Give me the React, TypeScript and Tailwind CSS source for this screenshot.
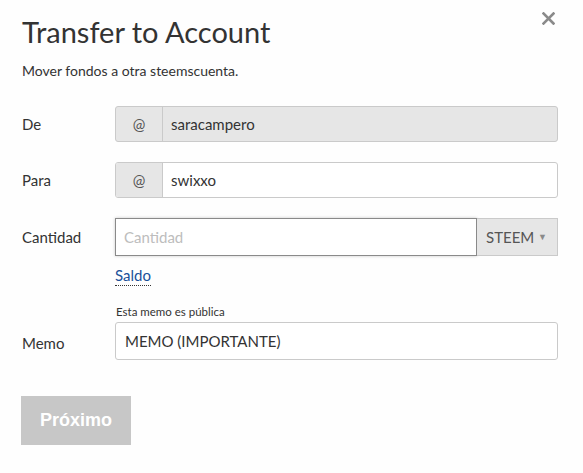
import React from 'react';

const font = { fontFamily: 'Lato, "Open Sans", sans-serif' };

export default function App() {
  return (
    <div className="w-[583px] h-[473px] bg-[#fefefe] text-[#333] relative" style={font}>
      <button className="absolute right-[28px] top-[12px] text-[#8a8a8a]" aria-label="Cerrar">
        <svg width="13" height="13" viewBox="0 0 13 13">
          <path d="M1.5 1.5 L11.5 11.5 M11.5 1.5 L1.5 11.5" stroke="currentColor" strokeWidth="2.6" strokeLinecap="square" />
        </svg>
      </button>

      <div className="pl-[22px] pr-[25px] pt-[14px]">
        <h1 className="text-[29px] leading-[36px] text-[#333] font-normal">Transfer to Account</h1>
        <p className="mt-[11px] text-[14px] leading-[20px]">Mover fondos a otra steemscuenta.</p>

        <div className="mt-[25px] flex items-center h-[36px]">
          <label className="w-[93px] text-[15px]">De</label>
          <div className="flex-1 flex h-full border border-[#cacaca] rounded-[3px] bg-[#e6e6e6] overflow-hidden">
            <span className="w-[47px] flex items-center justify-center border-r border-[#cacaca] text-[15px] text-[#555]">@</span>
            <span className="flex items-center px-[8px] text-[15px]">saracampero</span>
          </div>
        </div>

        <div className="mt-[20px] flex items-center h-[36px]">
          <label className="w-[93px] text-[15px]">Para</label>
          <div className="flex-1 flex h-full border border-[#cacaca] rounded-[3px] bg-white overflow-hidden">
            <span className="w-[47px] flex items-center justify-center border-r border-[#cacaca] bg-[#e6e6e6] text-[15px] text-[#555]">@</span>
            <span className="flex items-center px-[8px] text-[15px]">swixxo</span>
          </div>
        </div>

        <div className="mt-[20px] flex">
          <label className="w-[93px] text-[15px] h-[38px] flex items-center">Cantidad</label>
          <div className="flex-1">
            <div className="flex h-[38px]">
              <input
                placeholder="Cantidad"
                className="flex-1 min-w-0 border border-[#8a8a8a] bg-white px-[8px] text-[15px] outline-none placeholder:text-[#bdbdbd] shadow-[0_0_3px_#cacaca]"
                style={font}
              />
              <div className="w-[81px] flex items-center justify-between pl-[9px] pr-[10px] bg-[#e6e6e6] border border-l-0 border-[#cacaca] text-[15px] text-[#555]">
                <span>STEEM</span>
                <span className="text-[9px] text-[#8a8a8a]">▼</span>
              </div>
            </div>
            <a className="inline-block mt-[9px] text-[15px] leading-[20px] text-[#1a5099] border-b border-dotted border-[#333]">Saldo</a>
          </div>
        </div>

        <div className="mt-[18px] flex">
          <div className="w-[93px]" />
          <p className="text-[11.5px] leading-[14px] pl-[1px]">Esta memo es pública</p>
        </div>
        <div className="mt-[3px] flex items-center h-[38px]">
          <label className="w-[93px] text-[15px] pt-[4px]">Memo</label>
          <div className="flex-1 h-full flex items-center border border-[#cacaca] rounded-[3px] bg-white px-[9px] text-[15px]">
            MEMO (IMPORTANTE)
          </div>
        </div>

        <button
          className="mt-[36px] -ml-[1px] w-[110px] h-[49px] bg-[#c7c7c7] text-white font-bold text-[18px]"
          style={{ fontFamily: '"Liberation Sans", Arial, sans-serif' }}
        >
          Próximo
        </button>
      </div>
    </div>
  );
}
